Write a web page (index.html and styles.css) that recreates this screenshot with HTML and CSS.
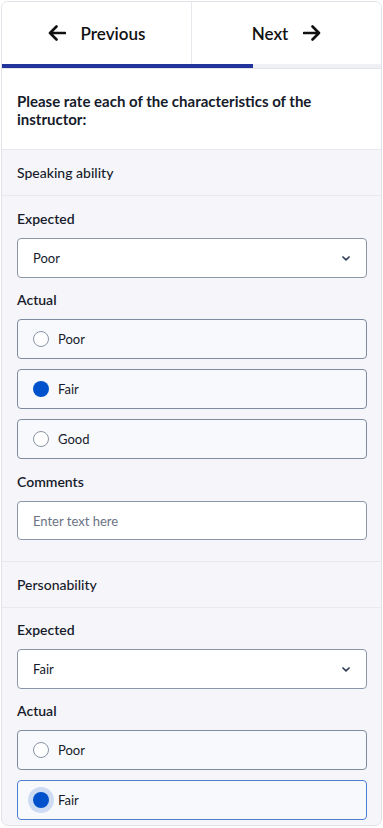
FILE: index.html
```html
<!DOCTYPE html>
<html lang="en">
<head>
<meta charset="utf-8">
<title>Survey</title>
<link rel="stylesheet" href="styles.css">
</head>
<body>
<div class="card">
  <nav class="nav">
    <button class="nav-btn">
      <svg class="arrow" viewBox="0 0 18 16" width="18" height="16"><path d="M17 8H2M8.5 1.5L2 8l6.5 6.5" fill="none" stroke="#111" stroke-width="2.6" stroke-linecap="round" stroke-linejoin="round"/></svg>
      <span>Previous</span>
    </button>
    <button class="nav-btn nav-next">
      <span>Next</span>
      <svg class="arrow" viewBox="0 0 18 16" width="18" height="16"><path d="M1 8h15M9.5 1.5L16 8l-6.5 6.5" fill="none" stroke="#111" stroke-width="2.6" stroke-linecap="round" stroke-linejoin="round"/></svg>
    </button>
  </nav>
  <div class="progress"><div class="progress-fill" style="width:251px"></div></div>
  <div class="question">Please rate each of the characteristics of the instructor:</div>

  <section class="group">
    <div class="group-title">Speaking ability</div>
    <div class="group-body">
      <div class="label">Expected</div>
      <div class="select"><span>Poor</span><svg class="chev" viewBox="0 0 8 5" width="8" height="5"><path d="M1 1l3 2.8L7 1" fill="none" stroke="#2f3d55" stroke-width="1.7" stroke-linecap="round" stroke-linejoin="round"/></svg></div>
      <div class="label">Actual</div>
      <div class="options">
        <div class="option"><span class="radio"></span><span>Poor</span></div>
        <div class="option"><span class="radio checked"></span><span>Fair</span></div>
        <div class="option"><span class="radio"></span><span>Good</span></div>
      </div>
      <div class="label">Comments</div>
      <div class="input"><span class="placeholder">Enter text here</span></div>
    </div>
  </section>

  <section class="group">
    <div class="group-title">Personability</div>
    <div class="group-body">
      <div class="label">Expected</div>
      <div class="select"><span>Fair</span><svg class="chev" viewBox="0 0 8 5" width="8" height="5"><path d="M1 1l3 2.8L7 1" fill="none" stroke="#2f3d55" stroke-width="1.7" stroke-linecap="round" stroke-linejoin="round"/></svg></div>
      <div class="label">Actual</div>
      <div class="options">
        <div class="option"><span class="radio"></span><span>Poor</span></div>
        <div class="option focused"><span class="radio checked halo"></span><span>Fair</span></div>
      </div>
    </div>
  </section>
</div>
</body>
</html>
```

FILE: styles.css
```css
* { box-sizing: border-box; }
html, body { margin: 0; padding: 0; background: #fff; }
body {
  padding: 1px 1px 0 1px;
  font-family: Lato, "Noto Sans", sans-serif;
  color: #161b2b;
}
.card {
  height: 825px;
  overflow: hidden;
  border: 1px solid #e1e3e8;
  border-radius: 7px;
  background: #f6f6fa;
}
.nav {
  display: flex;
  height: 62px;
  background: #fff;
}
.nav-btn {
  flex: 1;
  display: flex;
  align-items: center;
  justify-content: center;
  gap: 15px;
  border: 0;
  background: #fff;
  font-family: Lato, sans-serif;
  font-weight: 600;
  font-size: 17px;
  color: #111;
  padding: 0;
}
.nav-next { border-left: 1px solid #e6e8ee; }
.arrow { display: block; }
.progress {
  height: 5px;
  background: #eef0f4;
  border-bottom: 1px solid #e3e5ea;
}
.progress-fill {
  height: 4px;
  background: #22339c;
}
.question {
  background: #fff;
  padding: 23px 15px 21px;
  font-size: 15px;
  line-height: 18px;
  font-weight: 700;
  border-bottom: 1px solid #e6e8ee;
}
.group-title {
  padding: 13px 15px 12px;
  font-size: 14px;
  line-height: 20px;
  font-weight: 500;
  border-bottom: 1px solid #e8eaef;
}
.group-body {
  padding: 12px 14px 21px 15px;
  border-bottom: 1px solid #e6e8ee;
}
.group:first-child .group-body,
.question + .group .group-body { padding-top: 13px; }
.label {
  font-size: 14px;
  line-height: 20px;
  font-weight: 600;
  margin-bottom: 9px;
}
.label + .select { margin-bottom: 12px; }
.label + .options { margin-bottom: 13px; }
.select, .input {
  height: 40px;
  background: #fff;
  border: 1px solid #8a97aa;
  border-radius: 4px;
  display: flex;
  align-items: center;
  justify-content: space-between;
  padding: 0 15px;
  font-size: 13px;
}
.input { height: 39px; }
.chev { margin-right: 1px; }
.placeholder { color: #6b7385; }
.options {
  display: flex;
  flex-direction: column;
  gap: 10px;
}
.option {
  height: 40px;
  border: 1px solid #7f8ca0;
  border-radius: 4px;
  background: #f8f9fc;
  display: flex;
  align-items: center;
  gap: 9px;
  padding-left: 15px;
  font-size: 13px;
}
.option.focused { border-color: #4a7fd2; }
.radio {
  width: 16px;
  height: 16px;
  border-radius: 50%;
  border: 1.5px solid #8994a6;
  background: #fff;
  flex: none;
}
.radio.checked {
  border: 0;
  background: #0052cc;
}
.radio.halo {
  box-shadow: 0 0 0 5px #cddcf3;
}
```
